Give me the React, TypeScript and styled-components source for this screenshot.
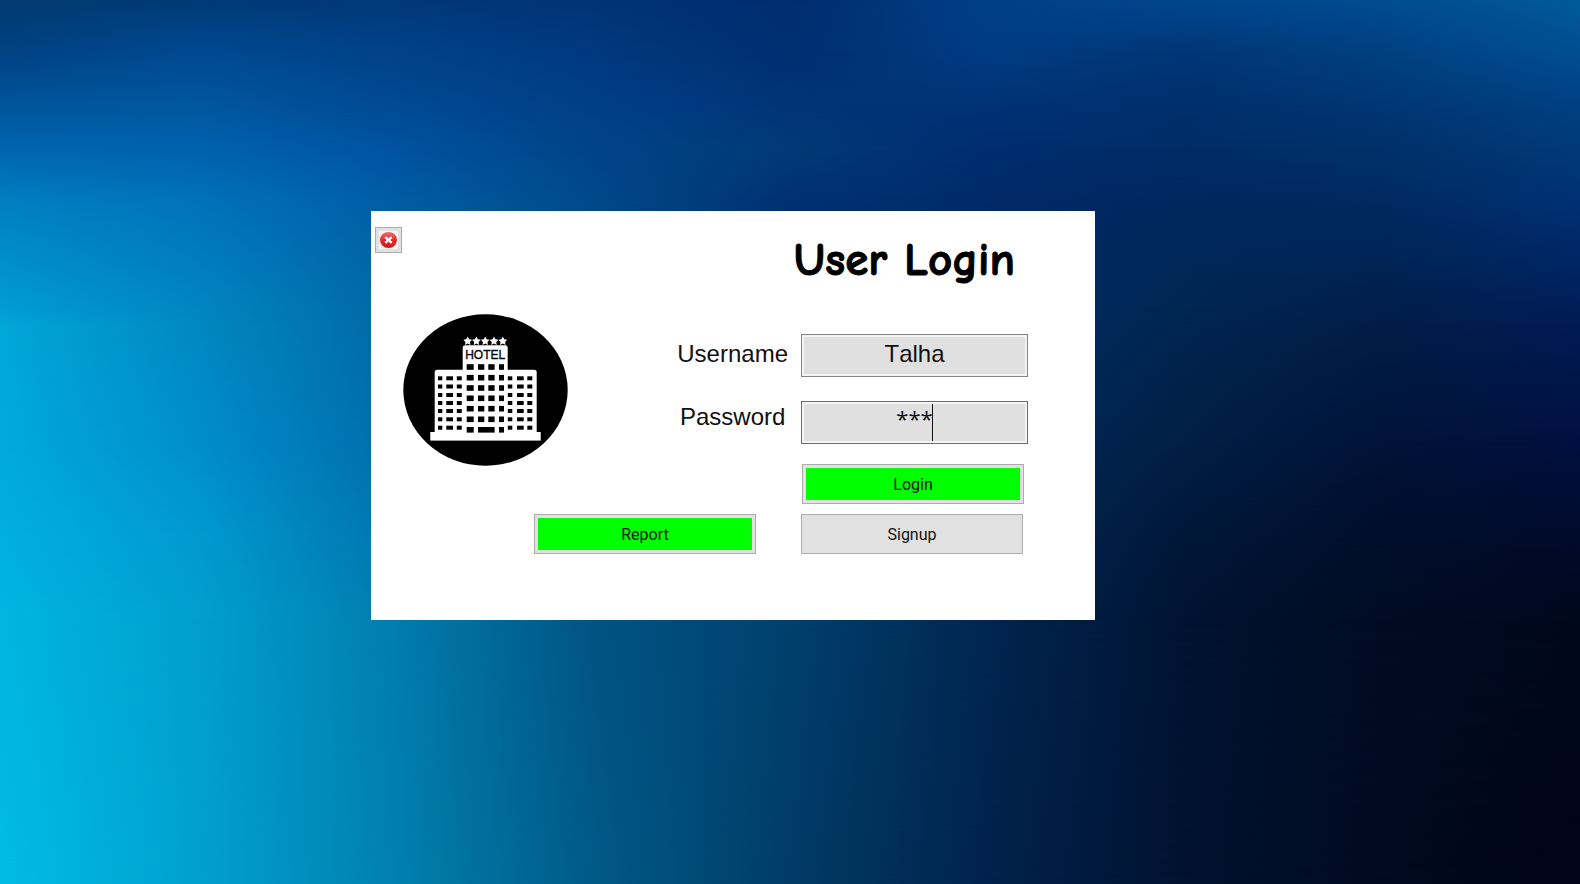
import React, { useState } from "react";
import styled, { createGlobalStyle } from "styled-components";

const GlobalStyle = createGlobalStyle`
  *, *::before, *::after { box-sizing: border-box; }
  body {
    margin: 0;
    font-family: "Liberation Sans", Arial, sans-serif;
    color: #111;
  }
`;

/* The wallpaper is a colour mesh: each band fades into the next one down. */
const bands: { at: number; colors: string[] }[] = [
  { at: 0, colors: ["#003a70", "#003a76", "#00387a", "#003378", "#002d70", "#003f85", "#00468e", "#004c90", "#005a9a"] },
  { at: 6, colors: ["#004282", "#004a92", "#004288", "#00397e", "#002f72", "#003c82", "#003676", "#004080", "#004e92"] },
  { at: 12, colors: ["#00569c", "#00579f", "#004a94", "#003f86", "#003478", "#003276", "#002f6c", "#003674", "#004082"] },
  { at: 17, colors: ["#0066b0", "#0062ae", "#0053a0", "#004488", "#003a76", "#002c70", "#002c66", "#003068", "#003a78"] },
  { at: 23, colors: ["#0080c2", "#0073bb", "#005da4", "#004a8a", "#003072", "#002a68", "#00285e", "#002a60", "#003074"] },
  { at: 35, colors: ["#009cd3", "#0086c0", "#0067a6", "#004c84", "#003470", "#002c64", "#002652", "#001f4b", "#001e58"] },
  { at: 37, colors: ["#00a8d7", "#0088c1", "#0068a7", "#004e86", "#003670", "#002c62", "#002550", "#001d47", "#001b54"] },
  { at: 50, colors: ["#00aadb", "#008eca", "#006cac", "#005088", "#003868", "#002a5c", "#001f44", "#001338", "#001040"] },
  { at: 61, colors: ["#00b0de", "#009acf", "#0075af", "#005286", "#003e6c", "#002856", "#001738", "#000e2b", "#000a2a"] },
  { at: 70, colors: ["#00b5e0", "#009fcf", "#007dae", "#005484", "#00406e", "#002650", "#001332", "#000c23", "#00081e"] },
  { at: 100, colors: ["#00bce4", "#00a0d0", "#0080ae", "#005a88", "#003c66", "#00224c", "#001230", "#000a20", "#000418"] },
];

const Desktop = styled.div`
  display: grid;
  min-height: 100vh;
  background: #003c66;
`;

const Band = styled.div<{ $colors: string[]; $from: number; $to: number }>`
  grid-area: 1 / 1;
  background: linear-gradient(to right, ${(p) => p.$colors.join(", ")});
  mask-image: ${(p) =>
    p.$to === 0 ? "none" : `linear-gradient(to bottom, transparent ${p.$from}%, #000 ${p.$to}%)`};
`;

const Stage = styled.main`
  grid-area: 1 / 1;
  z-index: 1;
  display: grid;
  grid-template-columns: 371fr minmax(auto, 724px) 485fr;
  grid-template-rows: 211fr auto 264fr;
`;

const Panel = styled.form`
  grid-area: 2 / 2;
  display: flex;
  flex-direction: column;
  padding: 16px 67px 66px 4px;
  background: #fff;
`;

const Header = styled.header`
  display: flex;
  justify-content: space-between;
  align-items: flex-start;
  height: 87px;
  padding-right: 13px;
`;

const Title = styled.h1`
  margin: 0;
  font: bold 47px/66px "Comic Sans MS", "Comic Neue", Lato, sans-serif;
  color: #000;
  -webkit-text-stroke: 1px #000;
`;

const CloseButton = styled.button`
  display: grid;
  place-items: center;
  width: 27px;
  height: 26px;
  padding: 0;
  border: 1px solid #adadad;
  background: #e1e1e1;
`;

const Body = styled.div`
  display: flex;
  justify-content: space-between;
  align-items: flex-start;
  padding-left: 28px;
`;

const Fields = styled.div`
  display: flex;
  gap: 13px;
  padding-top: 20px;
`;

const Labels = styled.div`
  display: flex;
  flex-direction: column;
  align-items: center;
  gap: 35px;
  padding-top: 6px;
`;

const Label = styled.label`
  font-size: 24px;
  line-height: 28px;
`;

const Inputs = styled.div`
  display: flex;
  flex-direction: column;
  gap: 24px;
  width: 227px;
`;

const InputFrame = styled.div`
  position: relative;
  display: flex;
`;

const Input = styled.input<{ $active?: boolean }>`
  width: 100%;
  height: 43px;
  padding: 0 0 ${(p) => (p.$active ? 10 : 4)}px;
  border: 1px solid ${(p) => (p.$active ? "#1883d7" : "#858585")};
  border-radius: 0;
  outline: none;
  box-shadow: inset 0 0 0 2px #f4f4f4;
  background: #e0e0e0;
  color: #111;
  font-family: ${(p) => (p.$active ? '"Open Sans"' : '"Liberation Sans"')}, sans-serif;
  font-size: ${(p) => (p.$active ? 22 : 24)}px;
  font-kerning: none;
  text-align: center;
`;

const Caret = styled.span`
  position: absolute;
  top: 3px;
  bottom: 3px;
  left: 131px;
  width: 1px;
  background: #111;
`;

const Actions = styled.div`
  display: flex;
  justify-content: flex-end;
  gap: 45px;
  margin-top: 10px;
  padding-right: 5px;
`;

const LoginButtonRow = styled.div`
  display: flex;
  justify-content: flex-end;
  padding-right: 4px;
  margin-top: -4px;
`;

const Button = styled.button<{ $green?: boolean }>`
  flex: 0 0 222px;
  height: 40px;
  padding: 1px 0 0;
  border: 1px solid #adadad;
  box-shadow: inset 0 0 0 3px #e1e1e1;
  background: ${(p) => (p.$green ? "#00ff00" : "#e1e1e1")};
  color: #111;
  font: 16px/24px Roboto, sans-serif;
`;

const Logo = styled.svg`
  display: block;
  width: 165px;
  height: 152px;
`;

const star = (cx: number, cy: number) =>
  Array.from({ length: 10 }, (_, i) => {
    const r = i % 2 ? 2.4 : 4.6;
    const a = (Math.PI * i) / 5 - Math.PI / 2;
    return `${cx + r * Math.cos(a)},${cy + r * Math.sin(a)}`;
  }).join(" ");

const towerColumns = [[63.7, 7], [75, 6.3], [85.3, 6.3], [96, 5]];
const towerRows = [53, 63.7, 74, 84.3, 94.7, 105.3];
const wingColumns = [[35, 4.3], [43.3, 6.7], [53.8, 5], [104.8, 4.5], [114, 6.7], [124.3, 5]];
const wingRows = [64.3, 72.5, 81, 89, 97, 105.3, 113.7];

function HotelLogo() {
  return (
    <Logo viewBox="0 0 165 152" role="img" aria-label="Hotel">
      <ellipse cx="82.5" cy="76" rx="82.2" ry="75.8" fill="#000" />
      <g fill="#fff">
        {[64.7, 73.4, 82.2, 91, 99.8].map((x) => (
          <polygon key={x} points={star(x, 27.2)} />
        ))}
        <rect x="59.7" y="31.3" width="45" height="88" rx="2.5" />
        <rect x="31.7" y="55.7" width="102" height="65" rx="2.5" />
        <rect x="27.3" y="118" width="110.4" height="8.6" />
      </g>
      <text x="82.2" y="45.2" textAnchor="middle" fontSize="12" fontFamily="Liberation Sans, sans-serif" stroke="#000" strokeWidth="0.3">
        HOTEL
      </text>
      {towerRows.map((y) => towerColumns.map(([x, w]) => <rect key={`${x}-${y}`} x={x} y={y - 2.8} width={w} height="5.6" />))}
      {wingRows.map((y) => wingColumns.map(([x, w]) => <rect key={`${x}-${y}`} x={x} y={y - 2} width={w} height="4" />))}
      <rect x="63.7" y="113" width="7" height="5.6" />
      <rect x="75" y="113" width="16.6" height="5.6" />
      <rect x="96" y="113" width="5" height="5.6" />
    </Logo>
  );
}

function CloseIcon() {
  return (
    <svg width="19" height="18" viewBox="0 0 19 18" aria-hidden="true">
      <defs>
        <linearGradient id="red" x1="0" y1="0" x2="0" y2="1">
          <stop offset="0" stopColor="#f06a6a" />
          <stop offset="0.5" stopColor="#e02c30" />
          <stop offset="1" stopColor="#cf1418" />
        </linearGradient>
      </defs>
      <rect width="19" height="18" fill="#f3f3f3" />
      <ellipse cx="9.5" cy="9" rx="8.5" ry="8" fill="url(#red)" />
      <path d="M6.3 6.2l6.4 5.6M12.7 6.2l-6.4 5.6" stroke="#fff" strokeWidth="2.4" />
    </svg>
  );
}

export default function App() {
  const [username, setUsername] = useState("Talha");
  const [password, setPassword] = useState("***");

  return (
    <>
      <GlobalStyle />
      <Desktop>
        {bands.map((band, i) => (
          <Band key={band.at} $colors={band.colors} $from={i ? bands[i - 1].at : 0} $to={band.at} />
        ))}
        <Stage>
          <Panel onSubmit={(e) => e.preventDefault()}>
            <Header>
              <CloseButton type="button" aria-label="Close">
                <CloseIcon />
              </CloseButton>
              <Title>User Login</Title>
            </Header>
            <Body>
              <HotelLogo />
              <Fields>
                <Labels>
                  <Label htmlFor="username">Username</Label>
                  <Label htmlFor="password">Password</Label>
                </Labels>
                <Inputs>
                  <Input id="username" value={username} onChange={(e) => setUsername(e.target.value)} />
                  <InputFrame>
                    <Input id="password" $active value={password} onChange={(e) => setPassword(e.target.value)} />
                    <Caret />
                  </InputFrame>
                  <LoginButtonRow>
                    <Button type="submit" $green>Login</Button>
                  </LoginButtonRow>
                </Inputs>
              </Fields>
            </Body>
            <Actions>
              <Button type="button" $green>Report</Button>
              <Button type="button">Signup</Button>
            </Actions>
          </Panel>
        </Stage>
      </Desktop>
    </>
  );
}
